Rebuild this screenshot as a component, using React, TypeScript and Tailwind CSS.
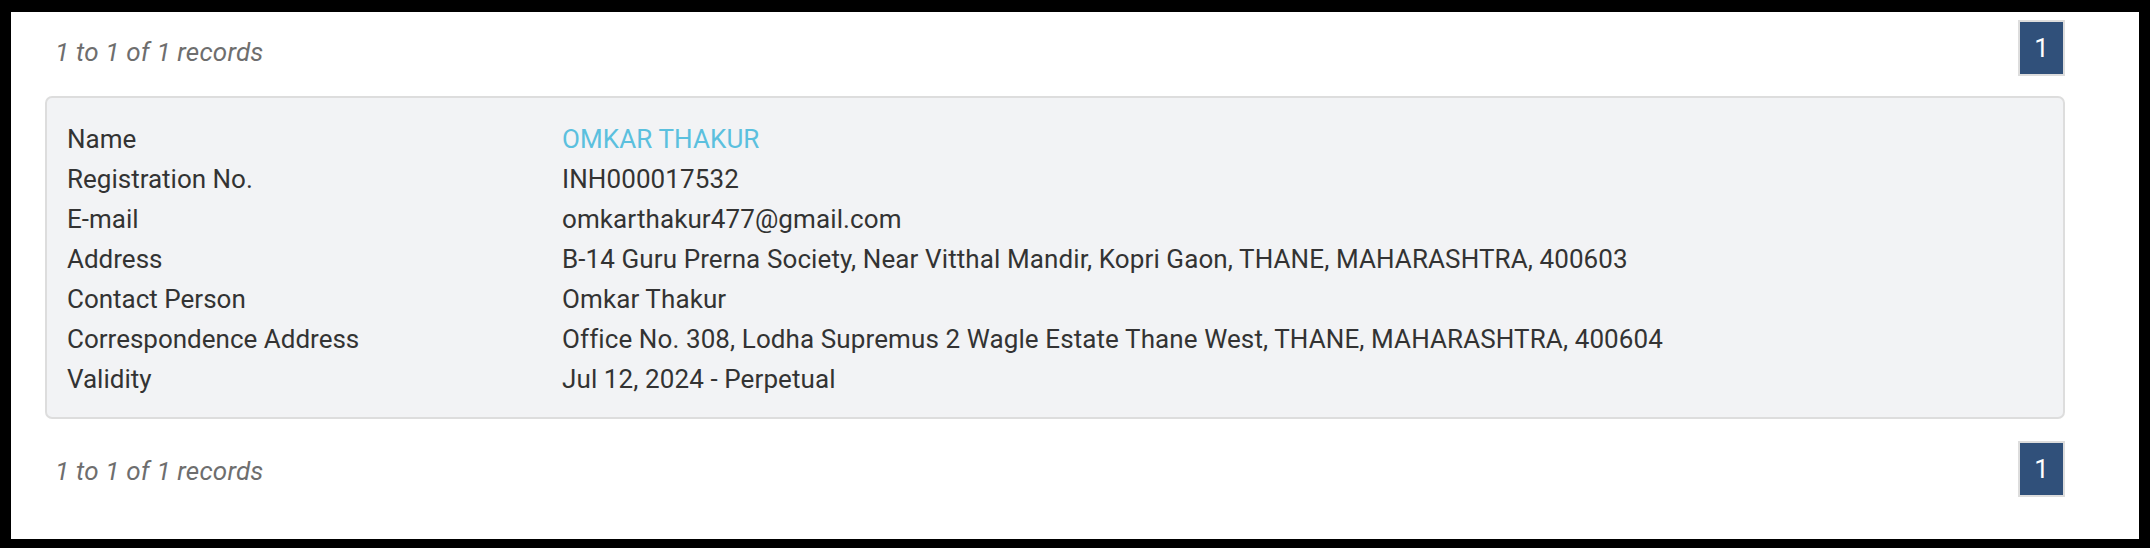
const rows: { label: string; value: string; link?: boolean }[] = [
  { label: "Name", value: "OMKAR THAKUR", link: true },
  { label: "Registration No.", value: "INH000017532" },
  { label: "E-mail", value: "omkarthakur477@gmail.com" },
  {
    label: "Address",
    value: "B-14 Guru Prerna Society, Near Vitthal Mandir, Kopri Gaon, THANE, MAHARASHTRA, 400603",
  },
  { label: "Contact Person", value: "Omkar Thakur" },
  {
    label: "Correspondence Address",
    value: "Office No. 308, Lodha Supremus 2 Wagle Estate Thane West, THANE, MAHARASHTRA, 400604",
  },
  { label: "Validity", value: "Jul 12, 2024 - Perpetual" },
];

function Pager({ top }: { top?: boolean }) {
  return (
    <div className="flex items-start justify-between">
      <span
        className={`pl-[10px] text-[26px] leading-[40px] tracking-[0.2px] italic text-[#6e6e6e] ${top ? "mt-[12px]" : "mt-[10px]"}`}
      >
        1 to 1 of 1 records
      </span>
      <button className="flex h-[56px] w-[47px] items-center justify-center border-2 border-[#dddddd] bg-[#30507a] text-[26px] text-white">
        1
      </button>
    </div>
  );
}

export default function App() {
  return (
    <div className="h-[548px] w-[2150px] bg-black pt-[12px] pr-[11px] pb-[9px] pl-[11px] font-['Roboto',sans-serif]">
      <div className="h-full w-full bg-white pt-[8px] pr-[74px] pl-[34px]">
        <Pager top />
        <div className="mt-[20px] rounded-[7px] border-2 border-[#dddddd] bg-[#f2f3f5] pt-[21px] pb-[18px] pl-[20px]">
          {rows.map((r) => (
            <div key={r.label} className="flex text-[26px] leading-[40px] text-[#333333]">
              <div className="w-[495px] shrink-0">{r.label}</div>
              <div className={`tracking-[0.1px] ${r.link ? "text-[#5bc0de]" : ""}`}>{r.value}</div>
            </div>
          ))}
        </div>
        <div className="mt-[22px]">
          <Pager />
        </div>
      </div>
    </div>
  );
}
